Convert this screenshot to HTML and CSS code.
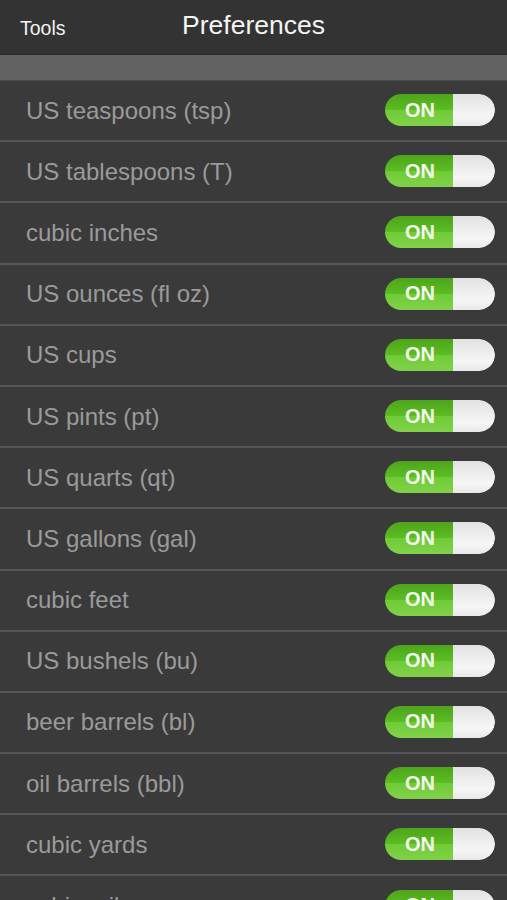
FILE: index.html
```html
<!DOCTYPE html>
<html lang="en">
<head>
<meta charset="UTF-8">
<meta name="viewport" content="width=device-width, initial-scale=1.0">
<title>Preferences</title>
<link rel="stylesheet" href="styles.css">
</head>
<body>
  <div class="screen">
    <div class="navbar">
      <span class="back">Tools</span>
      <h1 class="title">Preferences</h1>
    </div>
    <div class="band"></div>

    <ul class="units">
      <li><span class="name">US teaspoons (tsp)</span><span class="switch"><span class="on">ON</span><span class="knob"></span></span></li>
      <li><span class="name">US tablespoons (T)</span><span class="switch"><span class="on">ON</span><span class="knob"></span></span></li>
      <li><span class="name">cubic inches</span><span class="switch"><span class="on">ON</span><span class="knob"></span></span></li>
      <li><span class="name">US ounces (fl oz)</span><span class="switch"><span class="on">ON</span><span class="knob"></span></span></li>
      <li><span class="name">US cups</span><span class="switch"><span class="on">ON</span><span class="knob"></span></span></li>
      <li><span class="name">US pints (pt)</span><span class="switch"><span class="on">ON</span><span class="knob"></span></span></li>
      <li><span class="name">US quarts (qt)</span><span class="switch"><span class="on">ON</span><span class="knob"></span></span></li>
      <li><span class="name">US gallons (gal)</span><span class="switch"><span class="on">ON</span><span class="knob"></span></span></li>
      <li><span class="name">cubic feet</span><span class="switch"><span class="on">ON</span><span class="knob"></span></span></li>
      <li><span class="name">US bushels (bu)</span><span class="switch"><span class="on">ON</span><span class="knob"></span></span></li>
      <li><span class="name">beer barrels (bl)</span><span class="switch"><span class="on">ON</span><span class="knob"></span></span></li>
      <li><span class="name">oil barrels (bbl)</span><span class="switch"><span class="on">ON</span><span class="knob"></span></span></li>
      <li><span class="name">cubic yards</span><span class="switch"><span class="on">ON</span><span class="knob"></span></span></li>
      <li><span class="name">cubic miles</span><span class="switch"><span class="on">ON</span><span class="knob"></span></span></li>
    </ul>
  </div>
</body>
</html>
```

FILE: styles.css
```css
* {
  box-sizing: border-box;
}

body {
  margin: 0;
  background-color: #3a3a3a;
  font-family: "Liberation Sans", Arial, sans-serif;
}

.screen {
  width: 507px;
  height: 900px;
  overflow: hidden;
}

.navbar {
  position: relative;
  height: 55px;
  background-color: #333333;
  border-bottom: 1px solid #2a2a2a;
  display: flex;
  align-items: center;
  justify-content: center;
}

.back {
  position: absolute;
  left: 20px;
  top: 17px;
  color: #f2f2f2;
  font-size: 19.5px;
}

.title {
  margin: 0 0 4px 0;
  color: #f4f4f4;
  font-size: 26.5px;
  font-weight: normal;
}

.band {
  height: 26px;
  background-color: #626262;
  border-bottom: 1px solid #4a4a4a;
}

ul {
  margin: 0;
  padding: 0;
}

.units li {
  list-style-type: none;
  height: 61.2px;
  padding: 0 12px 0 26px;
  display: flex;
  align-items: center;
  justify-content: space-between;
  border-bottom: 2px solid #555555;
}

.name {
  color: #9a9a9a;
  font-size: 24px;
}

.switch {
  display: flex;
  width: 110px;
  height: 32px;
  border-radius: 16px;
  overflow: hidden;
  box-shadow: inset 0 1px 2px rgba(0, 0, 0, 0.3);
  margin-top: -1px;
}

.on {
  width: 68px;
  display: flex;
  align-items: center;
  justify-content: center;
  padding-left: 2px;
  color: #f4f9ee;
  font-size: 20px;
  font-weight: bold;
  background: linear-gradient(#4da51b 0%, #5cbd22 50%, #6fcb36 51%, #81d24a 100%);
}

.knob {
  flex: 1;
  background: linear-gradient(#e2e2e2, #f6f6f6 70%, #e8e8e8);
  border-radius: 0 16px 16px 0;
}
```
